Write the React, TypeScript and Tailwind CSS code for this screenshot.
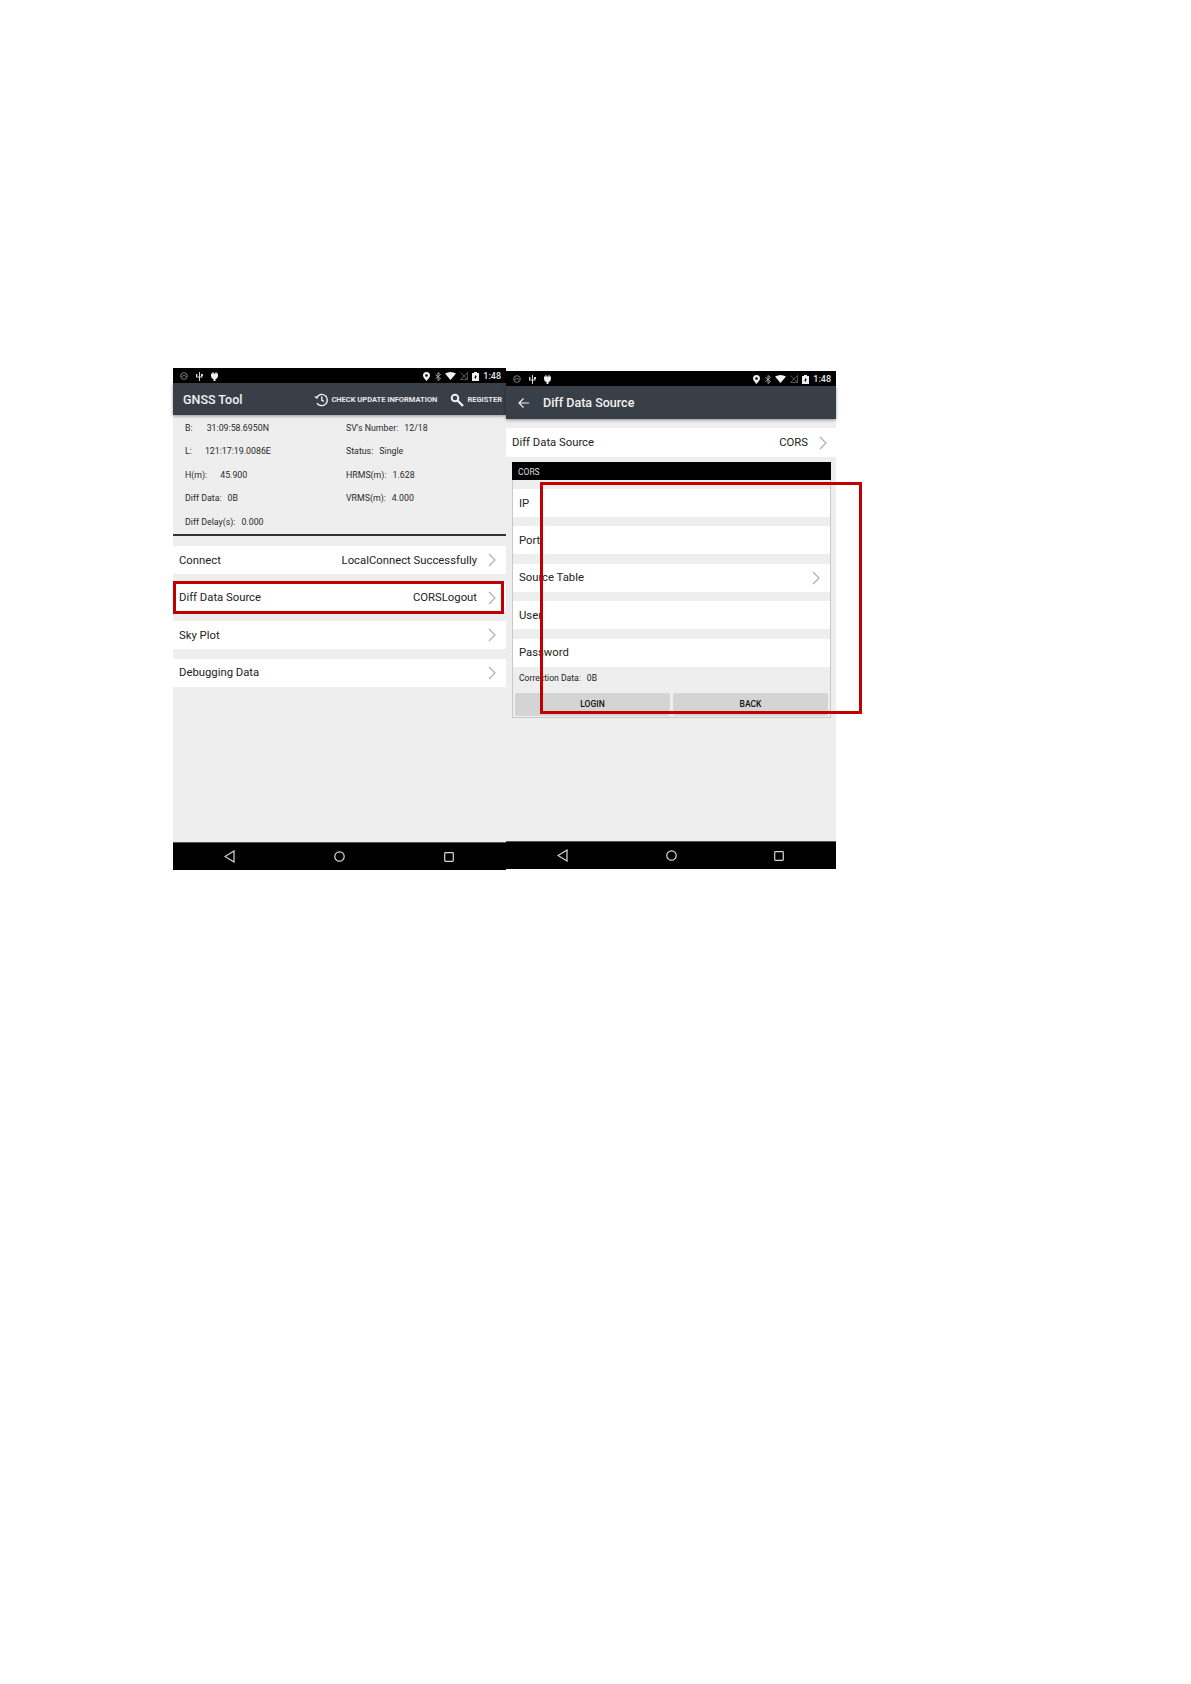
const infoLeft = [
  { label: 'B:', value: '31:09:58.6950N', gap: 'gap-[14px]' },
  { label: 'L:', value: '121:17:19.0086E', gap: 'gap-[13px]' },
  { label: 'H(m):', value: '45.900', gap: 'gap-[13px]' },
  { label: 'Diff Data:', value: '0B', gap: 'gap-[6px]' },
  { label: 'Diff Delay(s):', value: '0.000', gap: 'gap-[6px]' },
];

const infoRight = [
  { label: "SV's Number:", value: '12/18', gap: 'gap-[6px]' },
  { label: 'Status:', value: 'Single', gap: 'gap-[6px]' },
  { label: 'HRMS(m):', value: '1.628', gap: 'gap-[6px]' },
  { label: 'VRMS(m):', value: '4.000', gap: 'gap-[6px]' },
];

const Chevron = () => (
  <svg width="8" height="14" viewBox="0 0 8 14" fill="none" stroke="#ababab" strokeWidth="1.1" className="shrink-0">
    <path d="M1 1l6 6-6 6" />
  </svg>
);

const StatusBar = ({ time = '1:48' }: { time?: string }) => (
  <div className="h-[15px] bg-black flex items-center justify-between pl-[7px] pr-[5px] pt-[1px] shrink-0">
    <div className="flex items-center gap-[8px]">
      <svg width="8" height="8" viewBox="0 0 8 8" fill="none" stroke="#9a9a9a" strokeWidth="0.8">
        <circle cx="4" cy="4" r="3.3" />
        <path d="M1.5 4.5Q4 2.500 6.500 4.500" />
      </svg>
      <svg width="7" height="9" viewBox="0 0 7 9" fill="#d8d8d8">
        <path d="M3 0h1v9H3zM0 2h1.400v2H1v.6h2v1H0zM5 2h2v2H6.400v1.600H4v-1h1.400V4H5z" />
      </svg>
      <svg width="7" height="9" viewBox="0 0 7 9" fill="#eeeeee">
        <path d="M0 1.500h7V4a3.500 3.500 0 0 1-2.500 3.300V9h-2V7.300A3.500 3.500 0 0 1 0 4zM1.500 0h1v1.500h-1zM4.500 0h1v1.500h-1z" />
      </svg>
    </div>
    <div className="flex items-center">
      <svg width="7" height="9" viewBox="0 0 7 9" fill="#f0f0f0">
        <path fillRule="evenodd" d="M3.500 0A3.500 3.500 0 0 1 7 3.500C7 5.500 3.500 9 3.500 9S0 5.500 0 3.500A3.500 3.500 0 0 1 3.500 0zm0 2.200a1.300 1.300 0 1 0 0 2.600 1.300 1.300 0 0 0 0-2.600z" />
      </svg>
      <svg className="ml-[5px]" width="6" height="9" viewBox="0 0 6 9" fill="none" stroke="#c8c8c8" strokeWidth="0.8">
        <path d="M0.500 2.500l5 4-2.500 2V0.500l2.500 2-5 4" />
      </svg>
      <svg className="ml-[4px]" width="11" height="8" viewBox="0 0 11 8" fill="#f4f4f4">
        <path d="M0 1.500Q5.500-1.500 11 1.500L5.500 8z" />
      </svg>
      <svg className="ml-[4px]" width="8" height="8" viewBox="0 0 8 8" fill="none" stroke="#666666" strokeWidth="0.8">
        <path d="M0.500 7.500h7V0.500zM0.500 0.500l7 7" />
      </svg>
      <svg className="ml-[4px]" width="7" height="9" viewBox="0 0 7 9" fill="#f0f0f0">
        <path fillRule="evenodd" d="M2 0h3v1h2v8H0V1h2zM3 3v2H2l2 2V5h1z" />
      </svg>
      <span className="ml-[4px] text-[9px] leading-none font-medium text-[#e6e6e6]">{time}</span>
    </div>
  </div>
);

const NavBar = ({ positions }: { positions: string }) => (
  <div className={`h-[28px] bg-black border-t border-[#555] flex items-center shrink-0 ${positions}`}>
    <svg width="11" height="13" viewBox="0 0 11 13" fill="none" stroke="#d8d8d8" strokeWidth="1.200">
      <path d="M10 1v11L1 6.500z" />
    </svg>
    <svg width="11" height="11" viewBox="0 0 11 11" fill="none" stroke="#d8d8d8" strokeWidth="1.200">
      <circle cx="5.500" cy="5.500" r="4.700" />
    </svg>
    <svg width="10" height="10" viewBox="0 0 10 10" fill="none" stroke="#d8d8d8" strokeWidth="1.200">
      <rect x="0.700" y="0.700" width="8.600" height="8.600" rx="0.800" />
    </svg>
  </div>
);

const MenuRow = ({ label, value, framed }: { label: string; value?: string; framed?: boolean }) => (
  <div className="relative h-[28px] bg-white flex items-center justify-between pl-[6px] pr-[10px] text-[11.300px] text-[#222]">
    <span className="pt-[2px]">{label}</span>
    <div className="flex items-center gap-[11px]">
      {value && <span className="pt-[2px]">{value}</span>}
      <Chevron />
    </div>
    {framed && (
      <div className="absolute left-0 right-[2px] top-[-3px] bottom-[-2px] border-[3px] border-[#c00000]" />
    )}
  </div>
);

const FormRow = ({ label, arrow }: { label: string; arrow?: boolean }) => (
  <div className="h-[28px] bg-white flex items-center justify-between pl-[6px] pr-[10px] text-[11.300px] text-[#222]">
    <span className="pt-[2px]">{label}</span>
    {arrow && <Chevron />}
  </div>
);

const InfoLine = ({ item }: { item: { label: string; value: string; gap: string } }) => (
  <div className={`h-[23.500px] flex items-center ${item.gap}`}>
    <span>{item.label}</span>
    <span>{item.value}</span>
  </div>
);

const GnssTool = () => (
  <div className="w-[333px] h-[502px] bg-[#eeeeee] flex flex-col shrink-0">
    <StatusBar />
    <div className="h-[32px] bg-[#393f47] flex items-center justify-between pl-[10px] pr-[4px] pt-[2px] shadow-[0_1px_3px_rgba(0,0,0,0.4)] shrink-0">
      <span className="text-[12.500px] font-medium text-[#f2f2f2]">GNSS Tool</span>
      <div className="flex items-center">
        <svg width="15" height="14" viewBox="0 0 15 14" fill="none" stroke="#efefef" strokeWidth="1.400">
          <path d="M3 4a5.600 5.600 0 1 1 0 6" />
          <path d="M7.800 3.500v3.800l2.200 1" />
          <path d="M0 3.500h4.500L3 6z" fill="#efefef" stroke="none" />
        </svg>
        <span className="ml-[2px] text-[7.500px] font-bold text-[#e8e8e8]">CHECK UPDATE INFORMATION</span>
        <svg className="ml-[13px]" width="14" height="14" viewBox="0 0 14 14" fill="none" stroke="#efefef">
          <circle cx="5" cy="5" r="3.300" strokeWidth="2" />
          <path d="M7.500 7.500l5.500 5.500" strokeWidth="2.400" />
        </svg>
        <span className="ml-[3px] text-[7.500px] font-bold text-[#e8e8e8]">REGISTER</span>
      </div>
    </div>
    <div className="h-[117.500px] flex pl-[12px] pt-[1.500px] text-[8.800px] text-[#2a2a2a] border-b-2 border-[#333] box-content shrink-0">
      <div className="w-[161px]">
        {infoLeft.map((item) => (
          <InfoLine key={item.label} item={item} />
        ))}
      </div>
      <div>
        {infoRight.map((item) => (
          <InfoLine key={item.label} item={item} />
        ))}
      </div>
    </div>
    <div className="flex-1 flex flex-col gap-[9.500px] pt-[10px]">
      <MenuRow label="Connect" value="LocalConnect Successfully" />
      <MenuRow label="Diff Data Source" value="CORSLogout" framed />
      <MenuRow label="Sky Plot" />
      <MenuRow label="Debugging Data" />
    </div>
    <NavBar positions="pl-[51px] gap-[99px]" />
  </div>
);

const DiffDataSource = () => (
  <div className="relative w-[330px] h-[498px] mt-[3px] bg-[#eeeeee] flex flex-col shrink-0">
    <StatusBar />
    <div className="h-[33px] bg-[#393f47] flex items-center pl-[12px] gap-[14px] pt-[1px] shadow-[0_1px_3px_rgba(0,0,0,0.4)] shrink-0">
      <svg width="11" height="10" viewBox="0 0 11 10" fill="none" stroke="#f0f0f0" strokeWidth="1.200">
        <path d="M11 5H1M5.500 0.500L1 5l4.500 4.500" />
      </svg>
      <span className="text-[12.500px] font-medium text-[#f2f2f2]">Diff Data Source</span>
    </div>
    <div className="mt-[9px] h-[29px] bg-white flex items-center justify-between pl-[6px] pr-[9px] text-[11.300px] text-[#222] shrink-0">
      <span className="pt-[2px]">Diff Data Source</span>
      <div className="flex items-center gap-[11px]">
        <span className="pt-[2px]">CORS</span>
        <Chevron />
      </div>
    </div>
    <div className="ml-[6px] mr-[5px] mt-[5px] h-[256px] border border-t-0 border-[#c8c8c8] flex flex-col">
      <div className="h-[18px] bg-black -mx-px flex items-center pl-[6px] pt-[2px] text-[8.500px] text-[#dddddd] shrink-0">CORS</div>
      <div className="flex flex-col gap-[9.400px] pt-[9px]">
        <FormRow label="IP" />
        <FormRow label="Port" />
        <FormRow label="Source Table" arrow />
        <FormRow label="User" />
        <FormRow label="Password" />
      </div>
      <div className="h-[26px] flex items-center pl-[6px] pb-[3px] gap-[6px] text-[8.600px] text-[#222] shrink-0">
        <span>Correction Data:</span>
        <span>0B</span>
      </div>
      <div className="flex gap-[3px] px-[2px]">
        <button className="h-[23px] flex-1 rounded-[2px] bg-[#d4d4d4] text-[8.500px] font-medium text-[#111]">LOGIN</button>
        <button className="h-[23px] flex-1 rounded-[2px] bg-[#d4d4d4] text-[8.500px] font-medium text-[#111]">BACK</button>
      </div>
    </div>
    <div className="flex-1" />
    <NavBar positions="pl-[51px] gap-[97.500px]" />
    <div className="absolute left-[34px] top-[111px] w-[322px] h-[232px] border-[3px] border-[#c00000]" />
  </div>
);

export default function App() {
  return (
    <div className="w-[1191px] h-[1684px] bg-white pt-[368px] pl-[173px] font-['Roboto',sans-serif] overflow-hidden">
      <div className="flex items-start">
        <GnssTool />
        <DiffDataSource />
      </div>
    </div>
  );
}
